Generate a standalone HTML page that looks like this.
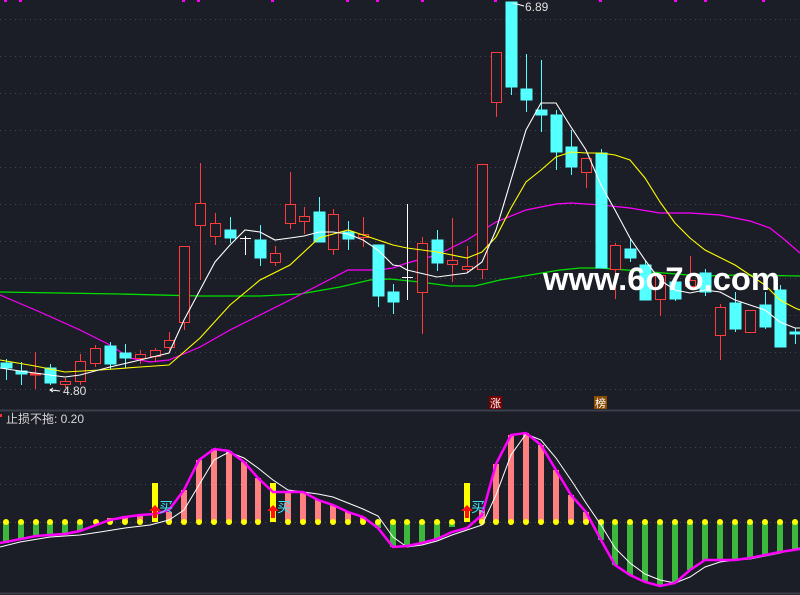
<!DOCTYPE html>
<html><head><meta charset="utf-8"><style>
html,body{margin:0;padding:0;background:#1c1e27;}
svg{display:block}
</style></head><body>
<svg width="800" height="595" viewBox="0 0 800 595" xmlns="http://www.w3.org/2000/svg" font-family="Liberation Sans, Noto Sans CJK SC, sans-serif">
<rect width="800" height="595" fill="#1c1e27"/>
<g stroke="#444852" stroke-width="1" stroke-dasharray="1,4">
<line x1="0" y1="19.5" x2="800" y2="19.5"/><line x1="0" y1="56.5" x2="800" y2="56.5"/><line x1="0" y1="93.5" x2="800" y2="93.5"/><line x1="0" y1="130.5" x2="800" y2="130.5"/><line x1="0" y1="167.5" x2="800" y2="167.5"/><line x1="0" y1="204.5" x2="800" y2="204.5"/><line x1="0" y1="241.5" x2="800" y2="241.5"/><line x1="0" y1="278.5" x2="800" y2="278.5"/><line x1="0" y1="315.5" x2="800" y2="315.5"/><line x1="0" y1="352.5" x2="800" y2="352.5"/><line x1="0" y1="389.5" x2="800" y2="389.5"/>
<line x1="0" y1="447.5" x2="800" y2="447.5"/><line x1="0" y1="484.5" x2="800" y2="484.5"/><line x1="0" y1="522.5" x2="800" y2="522.5"/>
</g>
<line x1="0" y1="410.5" x2="800" y2="410.5" stroke="#3a3e4a" stroke-width="2"/>
<line x1="0" y1="593.5" x2="800" y2="593.5" stroke="#3a3e4a" stroke-width="2"/>
<g fill="#ff00ff">
<rect x="4" y="0" width="3" height="2"/><rect x="19" y="0" width="3" height="2"/><rect x="182" y="0" width="3" height="2"/><rect x="197" y="0" width="3" height="2"/><rect x="271" y="0" width="3" height="2"/><rect x="346" y="0" width="3" height="2"/><rect x="376" y="0" width="3" height="2"/><rect x="421" y="0" width="3" height="2"/><rect x="494" y="0" width="3" height="2"/><rect x="599" y="0" width="3" height="2"/><rect x="674" y="0" width="3" height="2"/><rect x="704" y="0" width="3" height="2"/><rect x="762" y="0" width="3" height="2"/>
</g>
<polyline fill="none" stroke="#00e000" stroke-width="1.3" points="0,292 60,293 120,294 200,296 260,296 300,294 340,287 370,280 390,279 420,282 450,286 475,286 500,280 530,275 560,270 580,268 600,268 640,271 700,276 740,275 800,276"/>
<polyline fill="none" stroke="#ff00ff" stroke-width="1.2" points="0,295 40,312 80,330 110,345 130,358 150,362 169,360 200,347 230,330 260,315 290,300 319,285 348,270 378,270 393,268 407,263 437,255 467,240 496,222 526,210 556,204 571,203 601,205 630,208 660,213 690,213 720,215 750,221 770,228 785,240 800,253"/>
<g stroke-width="1">
<g stroke="#54ffff" fill="#54ffff">
<line x1="6.5" y1="359" x2="6.5" y2="380"/><rect x="1" y="363" width="11" height="5"/>
<line x1="21.5" y1="362" x2="21.5" y2="385"/><rect x="16" y="371" width="11" height="3"/>
<line x1="50.5" y1="364" x2="50.5" y2="385"/><rect x="45" y="368" width="11" height="15"/>
<line x1="110.5" y1="342" x2="110.5" y2="369"/><rect x="105" y="346" width="11" height="18"/>
<line x1="125.5" y1="344" x2="125.5" y2="368"/><rect x="120" y="353" width="11" height="5"/>
<line x1="230.5" y1="217" x2="230.5" y2="243"/><rect x="225" y="230" width="11" height="8"/>
<line x1="260.5" y1="225" x2="260.5" y2="266"/><rect x="255" y="240" width="11" height="18"/>
<line x1="319.5" y1="197" x2="319.5" y2="242"/><rect x="314" y="212" width="11" height="30"/>
<line x1="348.5" y1="221" x2="348.5" y2="250"/><rect x="343" y="232" width="11" height="7"/>
<line x1="378.5" y1="245" x2="378.5" y2="307"/><rect x="373" y="245" width="11" height="51"/>
<line x1="393.5" y1="284" x2="393.5" y2="314"/><rect x="388" y="292" width="11" height="10"/>
<line x1="437.5" y1="230" x2="437.5" y2="271"/><rect x="432" y="240" width="11" height="23"/>
<line x1="511.5" y1="2" x2="511.5" y2="95"/><rect x="506" y="2" width="11" height="85"/>
<line x1="526.5" y1="54" x2="526.5" y2="112"/><rect x="521" y="89" width="11" height="11"/>
<line x1="541.5" y1="60" x2="541.5" y2="132"/><rect x="536" y="110" width="11" height="5"/>
<line x1="556.5" y1="110" x2="556.5" y2="170"/><rect x="551" y="115" width="11" height="37"/>
<line x1="571.5" y1="130" x2="571.5" y2="175"/><rect x="566" y="147" width="11" height="20"/>
<line x1="601.5" y1="149" x2="601.5" y2="268"/><rect x="596" y="153" width="11" height="115"/>
<line x1="630.5" y1="238" x2="630.5" y2="262"/><rect x="625" y="249" width="11" height="9"/>
<line x1="645.5" y1="260" x2="645.5" y2="300"/><rect x="640" y="265" width="11" height="35"/>
<line x1="675.5" y1="275" x2="675.5" y2="301"/><rect x="670" y="282" width="11" height="17"/>
<line x1="705.5" y1="269" x2="705.5" y2="296"/><rect x="700" y="273" width="11" height="19"/>
<line x1="735.5" y1="292" x2="735.5" y2="332"/><rect x="730" y="303" width="11" height="26"/>
<line x1="765.5" y1="292" x2="765.5" y2="329"/><rect x="760" y="305" width="11" height="22"/>
<line x1="780.5" y1="285" x2="780.5" y2="347"/><rect x="775" y="290" width="11" height="57"/>
<line x1="795.5" y1="328" x2="795.5" y2="344"/><rect x="790" y="332" width="11" height="2"/>
</g>
<g stroke="#ff3b3b" fill="#1c1e27">
<line x1="35.5" y1="352" x2="35.5" y2="389"/><rect x="30.5" y="373.5" width="10" height="1.5" fill="#ff3b3b"/>
<line x1="65.5" y1="378" x2="65.5" y2="388"/><rect x="60.5" y="381.5" width="10" height="3"/>
<line x1="80.5" y1="354" x2="80.5" y2="385"/><rect x="75.5" y="361.5" width="10" height="20"/>
<line x1="95.5" y1="345" x2="95.5" y2="367"/><rect x="90.5" y="348.5" width="10" height="15"/>
<line x1="140.5" y1="350" x2="140.5" y2="364"/><rect x="135.5" y="354.5" width="10" height="4"/>
<line x1="155.5" y1="348" x2="155.5" y2="362"/><rect x="150.5" y="350.5" width="10" height="6"/>
<line x1="169.5" y1="332" x2="169.5" y2="350"/><rect x="164.5" y="340.5" width="10" height="7"/>
<line x1="184.5" y1="246" x2="184.5" y2="330"/><rect x="179.5" y="246.5" width="10" height="76"/>
<line x1="200.5" y1="163" x2="200.5" y2="280"/><rect x="195.5" y="203.5" width="10" height="22"/>
<line x1="215.5" y1="213" x2="215.5" y2="245"/><rect x="210.5" y="223.5" width="10" height="13"/>
<line x1="275.5" y1="246" x2="275.5" y2="266"/><rect x="270.5" y="253.5" width="10" height="9"/>
<line x1="290.5" y1="172" x2="290.5" y2="229"/><rect x="285.5" y="204.5" width="10" height="19"/>
<line x1="304.5" y1="207" x2="304.5" y2="234"/><rect x="299.5" y="216.5" width="10" height="5"/>
<line x1="333.5" y1="209" x2="333.5" y2="255"/><rect x="328.5" y="214.5" width="10" height="35"/>
<line x1="363.5" y1="217" x2="363.5" y2="247"/><rect x="358.5" y="234.5" width="10" height="3"/>
<line x1="422.5" y1="237" x2="422.5" y2="334"/><rect x="417.5" y="243.5" width="10" height="49"/>
<line x1="452.5" y1="218" x2="452.5" y2="282"/><rect x="447.5" y="260.5" width="10" height="4"/>
<line x1="467.5" y1="246" x2="467.5" y2="273"/><rect x="462.5" y="266.5" width="10" height="3"/>
<line x1="482.5" y1="164" x2="482.5" y2="279"/><rect x="477.5" y="164.5" width="10" height="105"/>
<line x1="496.5" y1="52" x2="496.5" y2="117"/><rect x="491.5" y="52.5" width="10" height="50"/>
<line x1="586.5" y1="158" x2="586.5" y2="188"/><rect x="581.5" y="158.5" width="10" height="14"/>
<line x1="615.5" y1="243" x2="615.5" y2="299"/><rect x="610.5" y="245.5" width="10" height="24"/>
<line x1="660.5" y1="275" x2="660.5" y2="316"/><rect x="655.5" y="275.5" width="10" height="24"/>
<line x1="690.5" y1="256" x2="690.5" y2="290"/><rect x="685.5" y="280.5" width="10" height="6"/>
<line x1="720.5" y1="304" x2="720.5" y2="360"/><rect x="715.5" y="307.5" width="10" height="28"/>
<line x1="750.5" y1="310" x2="750.5" y2="333"/><rect x="745.5" y="310.5" width="10" height="22"/>
</g>
<g stroke="#ffffff">
<line x1="245.5" y1="236" x2="245.5" y2="255"/><line x1="240" y1="238.5" x2="251" y2="238.5"/>
<line x1="407.5" y1="204" x2="407.5" y2="300"/><line x1="402" y1="277.5" x2="413" y2="277.5"/>
</g>
</g>
<polyline fill="none" stroke="#ffff00" stroke-width="1.1" points="0,360 35,366 65,372 100,370 140,367 169,365 200,338 230,305 260,280 290,265 319,238 348,230 378,240 393,245 407,248 437,252 467,258 482,252 496,237 511,208 526,182 541,170 556,157 571,152 586,153 601,153 615,155 630,160 645,178 660,202 675,223 690,238 705,250 735,265 765,285 780,300 795,308 800,310"/>
<polyline fill="none" stroke="#ffffff" stroke-width="1.1" points="0,368 20,371 50,375 65,377 80,375 110,367 140,360 169,353 184,320 200,290 215,262 230,245 245,230 260,232 275,240 290,238 304,236 319,232 333,232 348,234 363,240 378,250 393,265 400,266 407,270 437,277 467,273 482,262 496,230 511,180 526,130 541,103 556,103 571,127 586,150 601,185 615,210 630,238 645,260 660,280 675,290 690,293 705,290 720,292 735,300 750,305 765,310 780,322 795,328 800,328"/>
<g fill="#e0e0e0" font-size="12">
<path d="M51,390 L60,391" stroke="#fff" fill="none"/><path d="M53,388 L50,390 L53,392" stroke="#fff" fill="none"/>
<text x="63" y="395">4.80</text>
<path d="M513,3 L524,6" stroke="#fff" fill="none"/>
<text x="525" y="11">6.89</text>
</g>
<text x="543" y="290" font-size="32" font-weight="bold" fill="#ffffff" textLength="237" lengthAdjust="spacingAndGlyphs">www.6o7o.com</text>
<rect x="489" y="396" width="13" height="13" fill="#7a0000"/><text x="490" y="407" font-size="11" fill="#fff">涨</text>
<rect x="594" y="396" width="13" height="13" fill="#8a4a00"/><text x="595" y="407" font-size="11" fill="#fff">榜</text>
<rect x="0" y="414" width="2" height="3" fill="#ff3030"/>
<text x="6" y="423" font-size="12" fill="#d8d8d8">止损不拖: 0.20</text>
<g stroke-width="6">
<g stroke="#3cb83c">
<line x1="6" y1="522" x2="6" y2="543"/><line x1="21" y1="522" x2="21" y2="539"/><line x1="36" y1="522" x2="36" y2="536"/><line x1="50" y1="522" x2="50" y2="535"/><line x1="65" y1="522" x2="65" y2="534"/><line x1="80" y1="522" x2="80" y2="531"/>
<line x1="378" y1="522" x2="378" y2="528"/><line x1="393" y1="522" x2="393" y2="547"/><line x1="407" y1="522" x2="407" y2="546"/><line x1="422" y1="522" x2="422" y2="543"/><line x1="437" y1="522" x2="437" y2="539"/><line x1="452" y1="522" x2="452" y2="527"/>
<line x1="601" y1="522" x2="601" y2="540"/><line x1="615" y1="522" x2="615" y2="565"/><line x1="630" y1="522" x2="630" y2="575"/><line x1="645" y1="522" x2="645" y2="582"/><line x1="660" y1="522" x2="660" y2="585"/><line x1="675" y1="522" x2="675" y2="583"/><line x1="690" y1="522" x2="690" y2="570"/><line x1="705" y1="522" x2="705" y2="560"/><line x1="720" y1="522" x2="720" y2="560"/><line x1="735" y1="522" x2="735" y2="560"/><line x1="750" y1="522" x2="750" y2="558"/><line x1="765" y1="522" x2="765" y2="555"/><line x1="780" y1="522" x2="780" y2="552"/><line x1="795" y1="522" x2="795" y2="549"/>
</g>
<g stroke="#ff8080">
<line x1="110" y1="522" x2="110" y2="518"/><line x1="125" y1="522" x2="125" y2="516"/><line x1="140" y1="522" x2="140" y2="515"/>
<line x1="169" y1="522" x2="169" y2="512"/><line x1="184" y1="522" x2="184" y2="490"/><line x1="199" y1="522" x2="199" y2="460"/><line x1="214" y1="522" x2="214" y2="449"/><line x1="229" y1="522" x2="229" y2="451"/><line x1="244" y1="522" x2="244" y2="462"/><line x1="258" y1="522" x2="258" y2="478"/>
<line x1="288" y1="522" x2="288" y2="492"/><line x1="303" y1="522" x2="303" y2="492"/><line x1="318" y1="522" x2="318" y2="500"/><line x1="333" y1="522" x2="333" y2="505"/><line x1="348" y1="522" x2="348" y2="512"/><line x1="363" y1="522" x2="363" y2="517"/>
<line x1="482" y1="522" x2="482" y2="510"/><line x1="496" y1="522" x2="496" y2="464"/><line x1="511" y1="522" x2="511" y2="435"/><line x1="526" y1="522" x2="526" y2="433"/><line x1="541" y1="522" x2="541" y2="445"/><line x1="556" y1="522" x2="556" y2="470"/><line x1="571" y1="522" x2="571" y2="495"/><line x1="586" y1="522" x2="586" y2="512"/>
</g>
<g stroke="#ffff00" stroke-width="6">
<line x1="155" y1="522" x2="155" y2="483"/><line x1="273" y1="522" x2="273" y2="483"/><line x1="467" y1="522" x2="467" y2="483"/>
</g>
</g>
<g fill="#ffff00">
<circle cx="6" cy="522" r="3"/><circle cx="21" cy="522" r="3"/><circle cx="36" cy="522" r="3"/><circle cx="50" cy="522" r="3"/><circle cx="65" cy="522" r="3"/><circle cx="80" cy="522" r="3"/><circle cx="96" cy="522" r="3"/><circle cx="110" cy="522" r="3"/><circle cx="125" cy="522" r="3"/><circle cx="140" cy="522" r="3"/><circle cx="169" cy="522" r="3"/><circle cx="184" cy="522" r="3"/><circle cx="199" cy="522" r="3"/><circle cx="214" cy="522" r="3"/><circle cx="229" cy="522" r="3"/><circle cx="244" cy="522" r="3"/><circle cx="258" cy="522" r="3"/><circle cx="288" cy="522" r="3"/><circle cx="303" cy="522" r="3"/><circle cx="318" cy="522" r="3"/><circle cx="333" cy="522" r="3"/><circle cx="348" cy="522" r="3"/><circle cx="363" cy="522" r="3"/><circle cx="378" cy="522" r="3"/><circle cx="393" cy="522" r="3"/><circle cx="407" cy="522" r="3"/><circle cx="422" cy="522" r="3"/><circle cx="437" cy="522" r="3"/><circle cx="452" cy="522" r="3"/><circle cx="482" cy="522" r="3"/><circle cx="496" cy="522" r="3"/><circle cx="511" cy="522" r="3"/><circle cx="526" cy="522" r="3"/><circle cx="541" cy="522" r="3"/><circle cx="556" cy="522" r="3"/><circle cx="571" cy="522" r="3"/><circle cx="586" cy="522" r="3"/><circle cx="601" cy="522" r="3"/><circle cx="615" cy="522" r="3"/><circle cx="630" cy="522" r="3"/><circle cx="645" cy="522" r="3"/><circle cx="660" cy="522" r="3"/><circle cx="675" cy="522" r="3"/><circle cx="690" cy="522" r="3"/><circle cx="705" cy="522" r="3"/><circle cx="720" cy="522" r="3"/><circle cx="735" cy="522" r="3"/><circle cx="750" cy="522" r="3"/><circle cx="765" cy="522" r="3"/><circle cx="780" cy="522" r="3"/><circle cx="795" cy="522" r="3"/>
</g>
<polyline fill="none" stroke="#ffffff" stroke-width="1" points="0,547 20,542 50,537 80,535 100,532 125,528 150,525 169,520 184,510 199,485 214,460 229,452 244,458 258,468 273,480 288,490 303,492 318,494 333,497 348,503 363,509 378,516 393,537 407,547 422,545 437,541 452,535 467,530 482,525 496,495 511,455 526,434 541,440 556,458 571,480 586,503 601,525 615,548 630,563 645,574 660,580 675,583 690,577 705,567 720,562 735,560 750,559 765,556 780,553 795,549 800,548"/>
<polyline fill="none" stroke="#ff00ff" stroke-width="2.5" points="0,543 21,539 36,536 50,535 65,534 80,531 96,525 110,520 125,517 140,515 155,514 169,510 184,490 199,460 214,449 229,451 244,462 258,478 273,492 288,492 303,492 318,500 333,505 348,512 363,517 378,528 393,547 407,546 422,543 437,539 452,532 467,528 482,515 496,464 511,435 526,433 541,445 556,470 571,495 586,512 601,540 615,565 630,575 645,582 660,586 675,583 690,570 705,560 720,560 735,560 750,558 765,555 780,552 800,549"/>
<g fill="#ff1010">
<path d="M155,505 L161,511 L157,511 L157,518 L153,518 L153,511 L149,511 Z"/>
<path d="M273,505 L279,511 L275,511 L275,518 L271,518 L271,511 L267,511 Z"/>
<path d="M467,505 L473,511 L469,511 L469,518 L465,518 L465,511 L461,511 Z"/>
</g>
<g fill="#40e0f0" font-size="14">
<text x="159" y="512">买</text><text x="277" y="512">买</text><text x="471" y="512">买</text>
</g>
</svg>
</body></html>
